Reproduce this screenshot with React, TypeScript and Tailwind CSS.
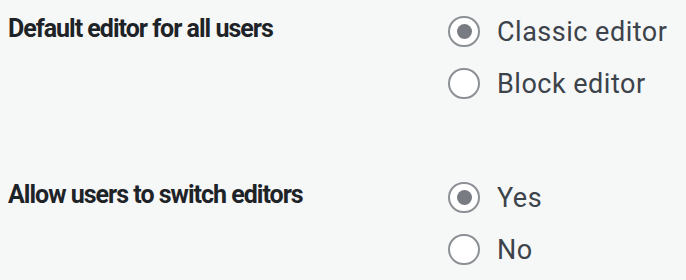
type Opt = { label: string; checked: boolean };

function Radio({ checked }: { checked: boolean }) {
  return (
    <span className="w-[32px] h-[31px] rounded-full border-2 border-[#8c8f94] bg-white flex items-center justify-center shrink-0">
      {checked && <span className="w-[15px] h-[15px] rounded-full bg-[#787c82]" />}
    </span>
  );
}

function Section({ title, options }: { title: string; options: Opt[] }) {
  return (
    <div className="flex">
      <div className="w-[440px] shrink-0 font-bold text-[25px] leading-[48px] tracking-[-1px] text-[#1d2327] whitespace-nowrap">
        {title}
      </div>
      <div className="flex flex-col">
        {options.map((o) => (
          <label key={o.label} className="flex items-center h-[52px] gap-[17px]">
            <Radio checked={o.checked} />
            <span className="text-[27px] leading-[52px] tracking-[0.5px] text-[#3c434a] pt-[2px] whitespace-nowrap">
              {o.label}
            </span>
          </label>
        ))}
      </div>
    </div>
  );
}

export default function App() {
  return (
    <div
      className="bg-[#f6f7f7] w-[686px] h-[280px] pl-[8px] pt-[5px] flex flex-col gap-[62px] overflow-hidden"
      style={{ fontFamily: 'Roboto, "Liberation Sans", sans-serif' }}
    >
      <Section
        title="Default editor for all users"
        options={[
          { label: "Classic editor", checked: true },
          { label: "Block editor", checked: false },
        ]}
      />
      <Section
        title="Allow users to switch editors"
        options={[
          { label: "Yes", checked: true },
          { label: "No", checked: false },
        ]}
      />
    </div>
  );
}
